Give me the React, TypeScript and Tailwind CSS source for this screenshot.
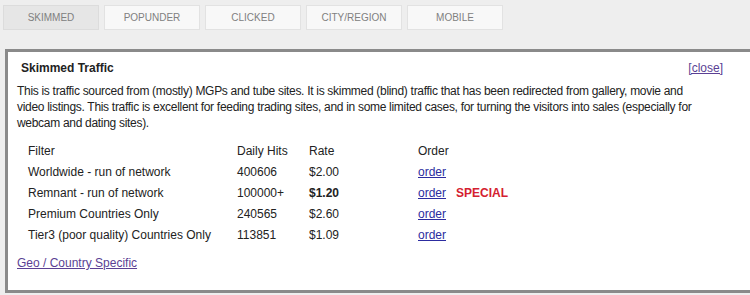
import React from 'react';

const tabs = ['SKIMMED', 'POPUNDER', 'CLICKED', 'CITY/REGION', 'MOBILE'];

const rows = [
  { filter: 'Worldwide - run of network', hits: '400606', rate: '$2.00' },
  { filter: 'Remnant - run of network', hits: '100000+', rate: '$1.20', special: true },
  { filter: 'Premium Countries Only', hits: '240565', rate: '$2.60' },
  { filter: 'Tier3 (poor quality) Countries Only', hits: '113851', rate: '$1.09' },
];

export default function App() {
  return (
    <div className="w-[750px] h-[295px] overflow-hidden bg-[#eeeeee] font-['Liberation_Sans',Arial,sans-serif] text-[#222]">
      {/* Tab strip */}
      <div className="flex gap-[5px] pl-[3px] pt-[5px]">
        {tabs.map((t, i) => (
          <div
            key={t}
            className={`w-[96px] h-[25px] flex items-center justify-center text-[10px] text-[#808080] border ${
              i === 0 ? 'bg-[#e6e6e6] border-[#dcdcdc]' : 'bg-[#f8f8f8] border-[#e2e2e2]'
            }`}
          >
            {t}
          </div>
        ))}
      </div>

      {/* Popup panel */}
      <div className="ml-[5px] mt-[19px] w-[760px] h-[244px] bg-white border-[3px] border-[#8a8a8a] text-[12px] leading-[16px]">
        <div className="flex items-start justify-between pl-[13px] pr-[39px] pt-[8px]">
          <div className="font-bold">Skimmed Traffic</div>
          <a className="text-[#5b3f94] underline" href="#">[close]</a>
        </div>
        <p className="mt-[7px] pl-[9px] pr-[10px] tracking-[-0.3px] whitespace-nowrap">
          This is traffic sourced from (mostly) MGPs and tube sites. It is skimmed (blind) traffic that has been
          redirected from gallery, movie and
          <br />
          video listings. This traffic is excellent for feeding trading sites, and in some limited cases, for turning
          the visitors into sales (especially for
          <br />
          webcam and dating sites).
        </p>

        <div className="mt-[9px] pl-[20px]">
          <div className="flex h-[21px] items-center">
            <div className="w-[209px]">Filter</div>
            <div className="w-[72px]">Daily Hits</div>
            <div className="w-[109px]">Rate</div>
            <div>Order</div>
          </div>
          {rows.map(r => (
            <div key={r.filter} className="flex h-[21px] items-center">
              <div className="w-[209px]">{r.filter}</div>
              <div className="w-[72px]">{r.hits}</div>
              <div className={`w-[109px] ${r.special ? 'font-bold' : ''}`}>{r.rate}</div>
              <a className="text-[#2c2ca0] underline" href="#">order</a>
              {r.special && <span className="ml-[10px] font-bold text-[#d42030]">SPECIAL</span>}
            </div>
          ))}
        </div>

        <a className="block mt-[10px] ml-[9px] text-[#5b3f94] underline" href="#">Geo / Country Specific</a>
      </div>
    </div>
  );
}
